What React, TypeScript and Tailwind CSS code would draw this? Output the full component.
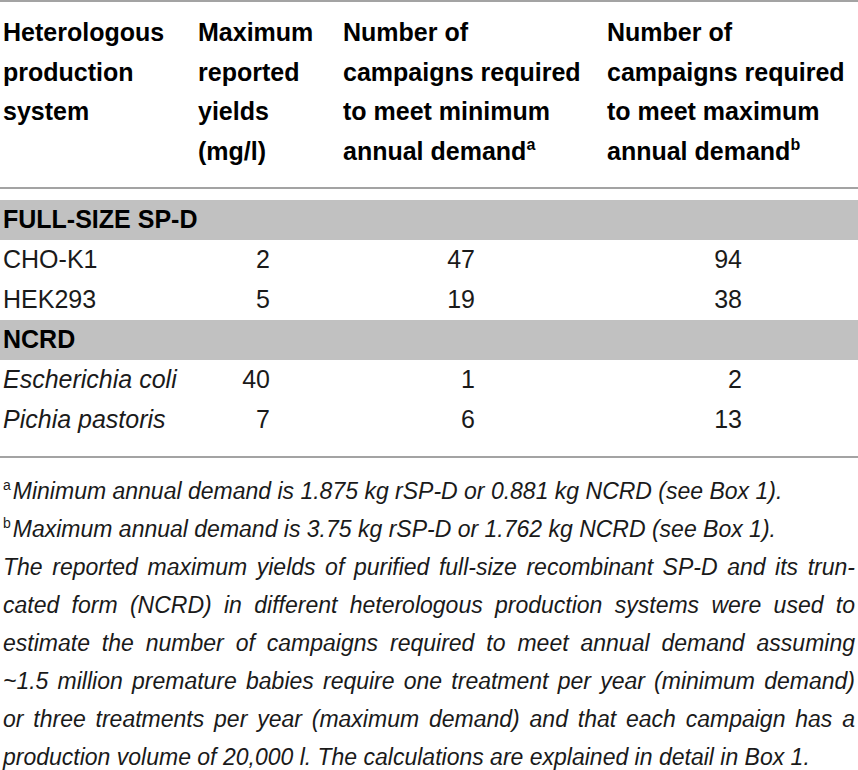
import React from "react";

const font = { fontFamily: '"Liberation Sans", Arial, sans-serif' };

function Band({ label }: { label: string }) {
  return (
    <div className="h-[40px] bg-[#c1c1c1] flex items-center pl-[3px] font-bold text-[25px] text-black">
      {label}
    </div>
  );
}

function Row({ name, italic, a, b, c }: { name: string; italic?: boolean; a: string; b: string; c: string }) {
  return (
    <div className="grid grid-cols-[198px_145px_264px_1fr] h-[40px] items-center text-[25px] text-[#1a1a1a]">
      <div className={"pl-[3px] whitespace-nowrap " + (italic ? "italic" : "")}>{name}</div>
      <div className="text-right pr-[73px]">{a}</div>
      <div className="text-right pr-[132px]">{b}</div>
      <div className="text-right pr-[116px]">{c}</div>
    </div>
  );
}

const lines = [
  "The reported maximum yields of purified full-size recombinant SP-D and its trun-",
  "cated form (NCRD) in different heterologous production systems were used to",
  "estimate the number of campaigns required to meet annual demand assuming",
  "~1.5 million premature babies require one treatment per year (minimum demand)",
  "or three treatments per year (maximum demand) and that each campaign has a",
];

export default function App() {
  return (
    <div className="w-[858px] h-[770px] bg-white overflow-hidden" style={font}>
      <div className="h-[2px] bg-[#a3a3a3]" />
      <div className="grid grid-cols-[198px_145px_264px_1fr] pt-[11px] pb-[16px] text-[25px] leading-[39.5px] font-bold text-black">
        <div className="pl-[3px]">
          Heterologous<br />production<br />system
        </div>
        <div>
          Maximum<br />reported<br />yields<br />(mg/l)
        </div>
        <div>
          Number of<br />campaigns required<br />to meet minimum<br />annual demand
          <sup className="text-[16px] -top-[10px]">a</sup>
        </div>
        <div>
          Number of<br />campaigns required<br />to meet maximum<br />annual demand
          <sup className="text-[16px] -top-[10px]">b</sup>
        </div>
      </div>
      <div className="h-[2px] bg-[#a3a3a3]" />
      <div className="h-[11px]" />
      <Band label="FULL-SIZE SP-D" />
      <Row name="CHO-K1" a="2" b="47" c="94" />
      <Row name="HEK293" a="5" b="19" c="38" />
      <Band label="NCRD" />
      <Row name="Escherichia coli" italic a="40" b="1" c="2" />
      <Row name="Pichia pastoris" italic a="7" b="6" c="13" />
      <div className="h-[16px]" />
      <div className="h-[2px] bg-[#a3a3a3]" />
      <div className="pt-[14px] pl-[3px] pr-[3px] text-[23px] leading-[38px] italic text-[#1a1a1a]">
        <div className="whitespace-nowrap">
          <sup className="not-italic text-[14px] -top-[9px] mr-[2px]">a</sup>
          Minimum annual demand is 1.875 kg rSP-D or 0.881 kg NCRD (see Box 1).
        </div>
        <div className="whitespace-nowrap">
          <sup className="not-italic text-[14px] -top-[9px] mr-[2px]">b</sup>
          Maximum annual demand is 3.75 kg rSP-D or 1.762 kg NCRD (see Box 1).
        </div>
        {lines.map((l, i) => (
          <div key={i} className="whitespace-nowrap text-justify [text-align-last:justify]">
            {l}
          </div>
        ))}
        <div className="whitespace-nowrap">
          production volume of 20,000 l. The calculations are explained in detail in Box 1.
        </div>
      </div>
    </div>
  );
}
